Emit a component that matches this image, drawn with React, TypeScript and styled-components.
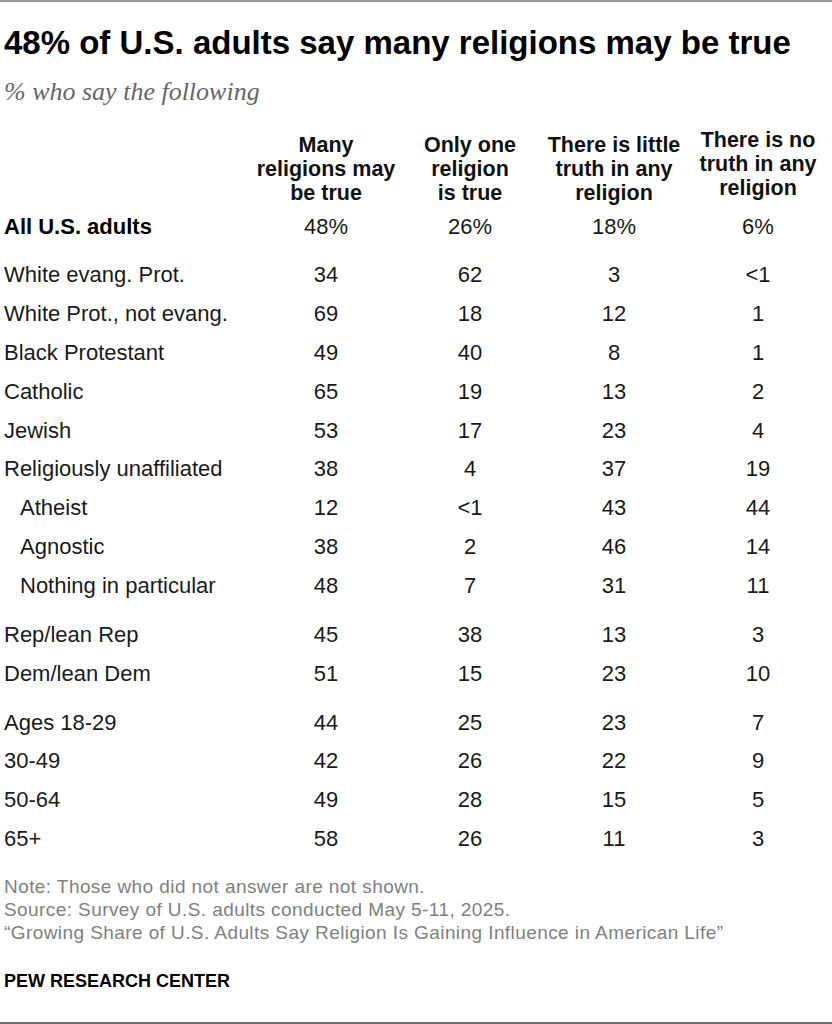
import React from "react";
import styled, { createGlobalStyle } from "styled-components";

const Global = createGlobalStyle`
  html, body { margin: 0; padding: 0; background: #fff; }
  body { font-family: "Liberation Sans", Arial, sans-serif; }
`;

const Frame = styled.div`
  width: 832px;
  height: 1024px;
  box-sizing: border-box;
  border-top: 2px solid #9a9a9a;
  border-bottom: 2px solid #6e6e6e;
  padding: 0 4px;
  display: flex;
  flex-direction: column;
  color: #1a1a1a;
`;

const Title = styled.h1`
  margin: 20.5px 0 0;
  font-family: "Liberation Sans", Arial, sans-serif;
  font-weight: 700;
  font-size: 33px;
  line-height: 40px;
  color: #000;
  letter-spacing: 0;
`;

const Subtitle = styled.p`
  margin: 14px 0 0;
  font-family: "Liberation Serif", "Times New Roman", serif;
  font-style: italic;
  font-size: 26px;
  line-height: 30px;
  color: #666;
`;

const Table = styled.div`
  margin-top: 21px;
  display: flex;
  flex-direction: column;
`;

const Grid = styled.div`
  display: grid;
  grid-template-columns: 250px repeat(4, 144px);
`;

const HeadRow = styled(Grid)`
  align-items: end;
`;

const HeadCell = styled.div<{ $lift?: number }>`
  font-family: "Liberation Sans", Arial, sans-serif;
  font-weight: 700;
  font-size: 21.5px;
  line-height: 24px;
  color: #111;
  text-align: center;
  padding-bottom: ${(p) => p.$lift ?? 0}px;
`;

const Group = styled.div<{ $gap: number }>`
  margin-top: ${(p) => p.$gap}px;
  display: flex;
  flex-direction: column;
`;

const Row = styled(Grid)`
  height: 38.8px;
  align-items: center;
  font-size: 22px;
  line-height: 38.8px;
`;

const Label = styled.div<{ $indent?: boolean; $bold?: boolean }>`
  padding-left: ${(p) => (p.$indent ? 16 : 0)}px;
  font-weight: ${(p) => (p.$bold ? 700 : 400)};
  white-space: nowrap;
  color: ${(p) => (p.$bold ? "#000" : "#1a1a1a")};
`;

const Value = styled.div`
  text-align: center;
  color: #1a1a1a;
`;

const Notes = styled.div`
  margin-top: 16px;
  font-size: 19px;
  line-height: 23px;
  letter-spacing: 0.42px;
  color: #808080;
`;

const Brand = styled.div`
  margin-top: 26px;
  font-weight: 700;
  font-size: 18px;
  line-height: 22px;
  color: #000;
`;

type R = { label: string; v: string[]; indent?: boolean; bold?: boolean };

const groups: R[][] = [
  [{ label: "All U.S. adults", v: ["48%", "26%", "18%", "6%"], bold: true }],
  [
    { label: "White evang. Prot.", v: ["34", "62", "3", "<1"] },
    { label: "White Prot., not evang.", v: ["69", "18", "12", "1"] },
    { label: "Black Protestant", v: ["49", "40", "8", "1"] },
    { label: "Catholic", v: ["65", "19", "13", "2"] },
    { label: "Jewish", v: ["53", "17", "23", "4"] },
    { label: "Religiously unaffiliated", v: ["38", "4", "37", "19"] },
    { label: "Atheist", v: ["12", "<1", "43", "44"], indent: true },
    { label: "Agnostic", v: ["38", "2", "46", "14"], indent: true },
    { label: "Nothing in particular", v: ["48", "7", "31", "11"], indent: true },
  ],
  [
    { label: "Rep/lean Rep", v: ["45", "38", "13", "3"] },
    { label: "Dem/lean Dem", v: ["51", "15", "23", "10"] },
  ],
  [
    { label: "Ages 18-29", v: ["44", "25", "23", "7"] },
    { label: "30-49", v: ["42", "26", "22", "9"] },
    { label: "50-64", v: ["49", "28", "15", "5"] },
    { label: "65+", v: ["58", "26", "11", "3"] },
  ],
];

const headers: { lines: string[]; lift?: number }[] = [
  { lines: ["Many", "religions may", "be true"] },
  { lines: ["Only one", "religion", "is true"] },
  { lines: ["There is little", "truth in any", "religion"] },
  { lines: ["There is no", "truth in any", "religion"], lift: 5 },
];

export default function App() {
  return (
    <>
      <Global />
      <Frame>
        <Title>48% of U.S. adults say many religions may be true</Title>
        <Subtitle>% who say the following</Subtitle>
        <Table>
          <HeadRow>
            <div />
            {headers.map((h, i) => (
              <HeadCell key={i} $lift={h.lift}>
                {h.lines.map((l, j) => (
                  <div key={j}>{l}</div>
                ))}
              </HeadCell>
            ))}
          </HeadRow>
          {groups.map((g, gi) => (
            <Group key={gi} $gap={gi === 0 ? 3 : 10.2}>
              {g.map((r) => (
                <Row key={r.label}>
                  <Label $indent={r.indent} $bold={r.bold}>
                    {r.label}
                  </Label>
                  {r.v.map((v, vi) => (
                    <Value key={vi}>{v}</Value>
                  ))}
                </Row>
              ))}
            </Group>
          ))}
        </Table>
        <Notes>
          <div>Note: Those who did not answer are not shown.</div>
          <div>Source: Survey of U.S. adults conducted May 5-11, 2025.</div>
          <div>“Growing Share of U.S. Adults Say Religion Is Gaining Influence in American Life”</div>
        </Notes>
        <Brand>PEW RESEARCH CENTER</Brand>
      </Frame>
    </>
  );
}
